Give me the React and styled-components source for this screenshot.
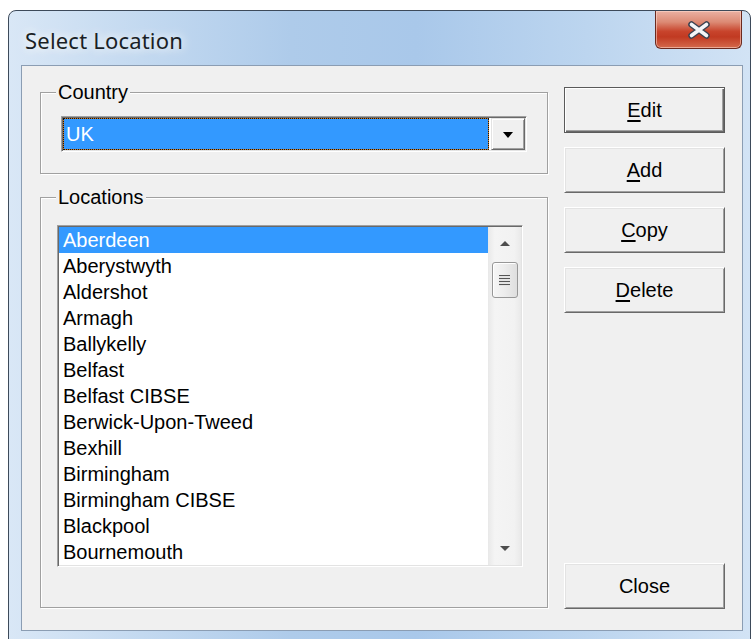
import React from 'react';
import styled, { createGlobalStyle } from 'styled-components';

const LOCATIONS = [
  'Aberdeen',
  'Aberystwyth',
  'Aldershot',
  'Armagh',
  'Ballykelly',
  'Belfast',
  'Belfast CIBSE',
  'Berwick-Upon-Tweed',
  'Bexhill',
  'Birmingham',
  'Birmingham CIBSE',
  'Blackpool',
  'Bournemouth',
];

const GlobalStyle = createGlobalStyle`
  html, body {
    margin: 0;
    padding: 0;
    height: 639px;
    overflow: hidden;
    background: #fff;
  }

  body {
    font-family: "Liberation Sans", Arial, sans-serif;
  }
`;

const Window = styled.div`
  box-sizing: border-box;
  margin: 10px 0 0 8px;
  width: 743px;
  height: 660px;
  padding: 0 7px 0 12px;
  border: 1px solid #3d4a5a;
  border-radius: 8px 8px 0 0;
  background: linear-gradient(
    90deg,
    #d9e7f6 0%,
    #c3d9f0 18%,
    #aecbea 38%,
    #a9c8ea 55%,
    #bcd5ef 78%,
    #d2e3f5 100%
  );
  display: flex;
  flex-direction: column;
`;

const TitleBar = styled.div`
  height: 54px;
  display: flex;
  align-items: flex-start;
  justify-content: space-between;
`;

const Title = styled.div`
  margin: 14px 0 0 4px;
  font-family: "Noto Sans", "Open Sans", sans-serif;
  font-size: 22px;
  line-height: 30px;
  letter-spacing: 0.2px;
  color: #1a1f26;
  text-shadow: 0 0 8px rgba(255, 255, 255, 0.95), 0 0 14px rgba(255, 255, 255, 0.8);
`;

const CloseButton = styled.div`
  box-sizing: border-box;
  width: 87px;
  height: 38px;
  margin-right: 1px;
  border: 1px solid #6b2a1f;
  border-top: none;
  border-radius: 0 0 6px 6px;
  background: linear-gradient(
    180deg,
    #eab1a3 0%,
    #dc8a74 30%,
    #c8442c 55%,
    #c13a22 70%,
    #d46a4c 100%
  );
  box-shadow: inset 0 0 0 1px rgba(255, 220, 210, 0.55);
  display: flex;
  align-items: center;
  justify-content: center;
`;

const Client = styled.div`
  box-sizing: border-box;
  height: 566px;
  border: 1px solid #8b9db3;
  background: #f0f0f0;
  padding: 15px 17px 0 18px;
  display: flex;
  gap: 16px;
`;

const LeftColumn = styled.div`
  width: 508px;
  display: flex;
  flex-direction: column;
  gap: 12px;
`;

const GroupBox = styled.fieldset`
  margin: 0;
  min-width: 0;
  padding: 0;
  border: 1px solid #a0a0a0;
  box-shadow: inset 1px 1px 0 #fff, 1px 1px 0 #fff;
`;

const GroupLabel = styled.legend`
  margin-left: 15px;
  padding: 0 2px;
  background: #f0f0f0;
  font-size: 20px;
  line-height: 22px;
  color: #000;
`;

const GroupBody = styled.div`
  padding: ${(p) => p.$padding};
`;

const Combo = styled.div`
  box-sizing: border-box;
  width: 466px;
  height: 36px;
  border: 1px solid;
  border-color: #a0a0a0 #fff #fff #a0a0a0;
  box-shadow: inset 1px 1px 0 #696969, inset -1px -1px 0 #e3e3e3;
  padding: 1px;
  background: #fff;
  display: flex;
  gap: 2px;
`;

const ComboValue = styled.div`
  flex: 1;
  border: 1px dotted #141414;
  background: linear-gradient(#3399ff, #3399ff) padding-box,
    linear-gradient(#cf7a20, #cf7a20) border-box;
  padding-left: 2px;
  font-size: 20px;
  line-height: 30px;
  color: #fff;
`;

const DropButton = styled.div`
  box-sizing: border-box;
  width: 34px;
  border: 1px solid;
  border-color: #e3e3e3 #696969 #696969 #e3e3e3;
  box-shadow: inset 1px 1px 0 #fff, inset -1px -1px 0 #a0a0a0;
  background: #f0f0f0;
  display: flex;
  align-items: center;
  justify-content: center;

  &::after {
    content: '';
    margin-top: 1px;
    border-left: 5px solid transparent;
    border-right: 5px solid transparent;
    border-top: 6px solid #000;
  }
`;

const ListBox = styled.div`
  box-sizing: border-box;
  width: 466px;
  height: 342px;
  border: 1px solid;
  border-color: #a0a0a0 #fff #fff #a0a0a0;
  box-shadow: inset 1px 1px 0 #696969, inset -1px -1px 0 #e3e3e3;
  padding: 1px;
  background: #fff;
  display: flex;
`;

const Items = styled.div`
  flex: 1;
  overflow: hidden;
`;

const Item = styled.div`
  height: 26px;
  padding-left: 4px;
  font-size: 20px;
  line-height: 26px;
  white-space: nowrap;
  color: ${(p) => (p.$selected ? '#fff' : '#000')};
  background: ${(p) => (p.$selected ? '#3399ff' : 'transparent')};
`;

const ScrollBar = styled.div`
  width: 33px;
  background: linear-gradient(90deg, #e8e8e8 0%, #f4f4f4 20%, #f2f2f2 80%, #e9e9e9 100%);
  display: flex;
  flex-direction: column;
  align-items: center;
`;

const ScrollArrow = styled.div`
  height: 33px;
  display: flex;
  align-items: center;
  justify-content: center;

  &::after {
    content: '';
    border-left: 5px solid transparent;
    border-right: 5px solid transparent;
    ${(p) => (p.$down ? 'border-top' : 'border-bottom')}: 5px solid #4e4e4e;
  }
`;

const Thumb = styled.div`
  box-sizing: border-box;
  width: 26px;
  height: 36px;
  margin-top: 2px;
  border: 1px solid #979797;
  border-radius: 3px;
  background: linear-gradient(90deg, #f6f6f6 0%, #ececec 50%, #dedede 100%);
  box-shadow: inset 1px 1px 0 #fff;
  display: flex;
  align-items: center;
  justify-content: center;

  &::after {
    content: '';
    width: 11px;
    height: 11px;
    background: repeating-linear-gradient(
      180deg,
      #555 0px,
      #555 1px,
      #e4e4e4 1px,
      #e4e4e4 3px
    );
  }
`;

const Spacer = styled.div`
  flex: 1;
`;

const RightColumn = styled.div`
  width: 161px;
  padding: 6px 0 21px;
  display: flex;
  flex-direction: column;
  gap: 14px;
`;

const Button = styled.div`
  box-sizing: border-box;
  height: 46px;
  border: 1px solid;
  border-color: ${(p) => (p.$default ? '#5a5a5a' : '#fff #696969 #696969 #fff')};
  box-shadow: ${(p) =>
    p.$default
      ? 'inset 1px 1px 0 #fff, inset -1px -1px 0 #696969, inset -2px -2px 0 #a0a0a0'
      : 'inset 1px 1px 0 #e3e3e3, inset -1px -1px 0 #a0a0a0'};
  background: #f0f0f0;
  display: flex;
  align-items: center;
  justify-content: center;
  font-size: 20px;
  color: #000;
  ${(p) => p.$bottom && 'margin-top: auto;'}
`;

const Key = styled.span`
  text-decoration: underline;
  text-underline-offset: 3px;
`;

function CloseGlyph() {
  return (
    <svg width="24" height="18" viewBox="-12 -9 24 18">
      <path d="M-7.5 -5.5 L7.5 5.5 M-7.5 5.5 L7.5 -5.5" stroke="#3b4351" strokeWidth="6.5" strokeLinecap="round" />
      <path d="M-7.5 -5.5 L7.5 5.5 M-7.5 5.5 L7.5 -5.5" stroke="#f4f6f8" strokeWidth="3.6" strokeLinecap="round" />
    </svg>
  );
}

function App() {
  return (
    <>
      <GlobalStyle />
      <Window>
        <TitleBar>
          <Title>Select Location</Title>
          <CloseButton>
            <CloseGlyph />
          </CloseButton>
        </TitleBar>
        <Client>
          <LeftColumn>
            <GroupBox>
              <GroupLabel>Country</GroupLabel>
              <GroupBody $padding="13px 20px 21px 20px">
                <Combo>
                  <ComboValue>UK</ComboValue>
                  <DropButton />
                </Combo>
              </GroupBody>
            </GroupBox>
            <GroupBox>
              <GroupLabel>Locations</GroupLabel>
              <GroupBody $padding="17px 24px 40px 16px">
                <ListBox>
                  <Items>
                    {LOCATIONS.map((name, i) => (
                      <Item key={name} $selected={i === 0}>
                        {name}
                      </Item>
                    ))}
                  </Items>
                  <ScrollBar>
                    <ScrollArrow />
                    <Thumb />
                    <Spacer />
                    <ScrollArrow $down />
                  </ScrollBar>
                </ListBox>
              </GroupBody>
            </GroupBox>
          </LeftColumn>
          <RightColumn>
            <Button $default>
              <Key>E</Key>dit
            </Button>
            <Button>
              <Key>A</Key>dd
            </Button>
            <Button>
              <Key>C</Key>opy
            </Button>
            <Button>
              <Key>D</Key>elete
            </Button>
            <Button $bottom>Close</Button>
          </RightColumn>
        </Client>
      </Window>
    </>
  );
}

export default App;
